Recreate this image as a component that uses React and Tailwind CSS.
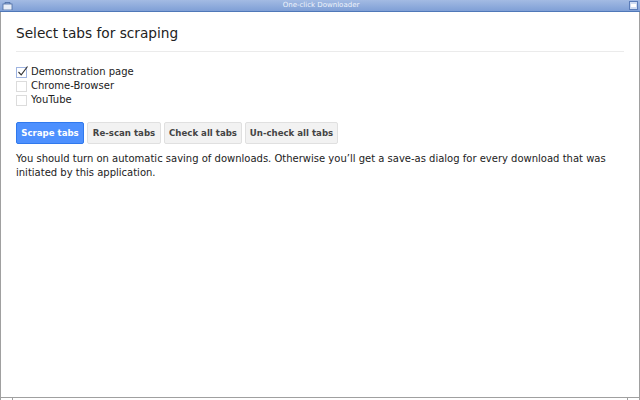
export default function App() {
  const ff = { fontFamily: '"DejaVu Sans", sans-serif' };
  return (
    <div className="w-[640px] h-[400px] flex flex-col bg-white overflow-hidden" style={ff}>
      <div className="h-[12px] flex items-center justify-between bg-gradient-to-b from-[#a3bbe3] to-[#7f9fd6] border-b border-[#4f78b8] px-[2px]">
        <svg width="11" height="9" viewBox="0 0 11 9">
          <rect x="1" y="3" width="9" height="6" fill="#e8eef8" stroke="#4a6aa0" strokeWidth="0.8" />
          <path d="M3 3 V1.5 H8 V3" fill="none" stroke="#4a6aa0" strokeWidth="0.8" />
        </svg>
        <span className="text-[7px] leading-none text-[#eef3fb]">One-click Downloader</span>
        <svg width="9" height="9" viewBox="0 0 9 9">
          <rect x="0.5" y="0.5" width="8" height="8" fill="#cfdcf2" stroke="#5a7cb8" />
          <rect x="2" y="3" width="5" height="3" fill="#fff" />
        </svg>
      </div>
      <div className="flex-1 flex flex-col border-x border-[#a0a0a0] px-[15px]">
        <h1 className="text-[13.7px] leading-[18px] text-[#222] mt-[12px] pb-[9px] border-b border-[#ebebeb]">Select tabs for scraping</h1>
        <div className="mt-[13px] flex flex-col text-[10px] leading-[14px] text-[#222]">
          {[
            ["Demonstration page", true],
            ["Chrome-Browser", false],
            ["YouTube", false],
          ].map(([l, c]) => (
            <label key={l} className="flex items-center gap-[4px] h-[14px]">
              <span className={"w-[11px] h-[11px] border relative flex-none " + (c ? "border-[#9fb4e0]" : "border-[#dcdcdc]")}>
                {c && (
                  <svg className="absolute -top-[3px] left-0" width="12" height="12" viewBox="0 0 12 12">
                    <path d="M1.5 7 L4.2 9.8 L10.5 1.5" fill="none" stroke="#333" strokeWidth="1.1" />
                  </svg>
                )}
              </span>
              <span>{l}</span>
            </label>
          ))}
        </div>
        <div className="mt-[15px] flex gap-[3px] text-[8.6px] font-bold">
          <button className="h-[22px] w-[68px] rounded-[2px] bg-[#4d90fe] border border-[#3079ed] text-white">Scrape tabs</button>
          <button className="h-[22px] w-[74px] rounded-[2px] bg-[#f2f2f2] border border-[#e0e0e0] text-[#444]">Re-scan tabs</button>
          <button className="h-[22px] w-[78px] rounded-[2px] bg-[#f2f2f2] border border-[#e0e0e0] text-[#444]">Check all tabs</button>
          <button className="h-[22px] w-[93px] rounded-[2px] bg-[#f2f2f2] border border-[#e0e0e0] text-[#444]">Un-check all tabs</button>
        </div>
        <p className="mt-[8px] text-[10px] leading-[14px] text-[#222] w-[608px]">
          You should turn on automatic saving of downloads. Otherwise you’ll get a save-as dialog for every download that was initiated by this application.
        </p>
      </div>
      <div className="h-[3px] flex border-t border-[#a0a0a0] bg-white">
        <div className="w-[13px] border-r border-[#a0a0a0] border-l" />
        <div className="flex-1" />
        <div className="w-[13px] border-l border-[#a0a0a0] border-r" />
      </div>
    </div>
  );
}
